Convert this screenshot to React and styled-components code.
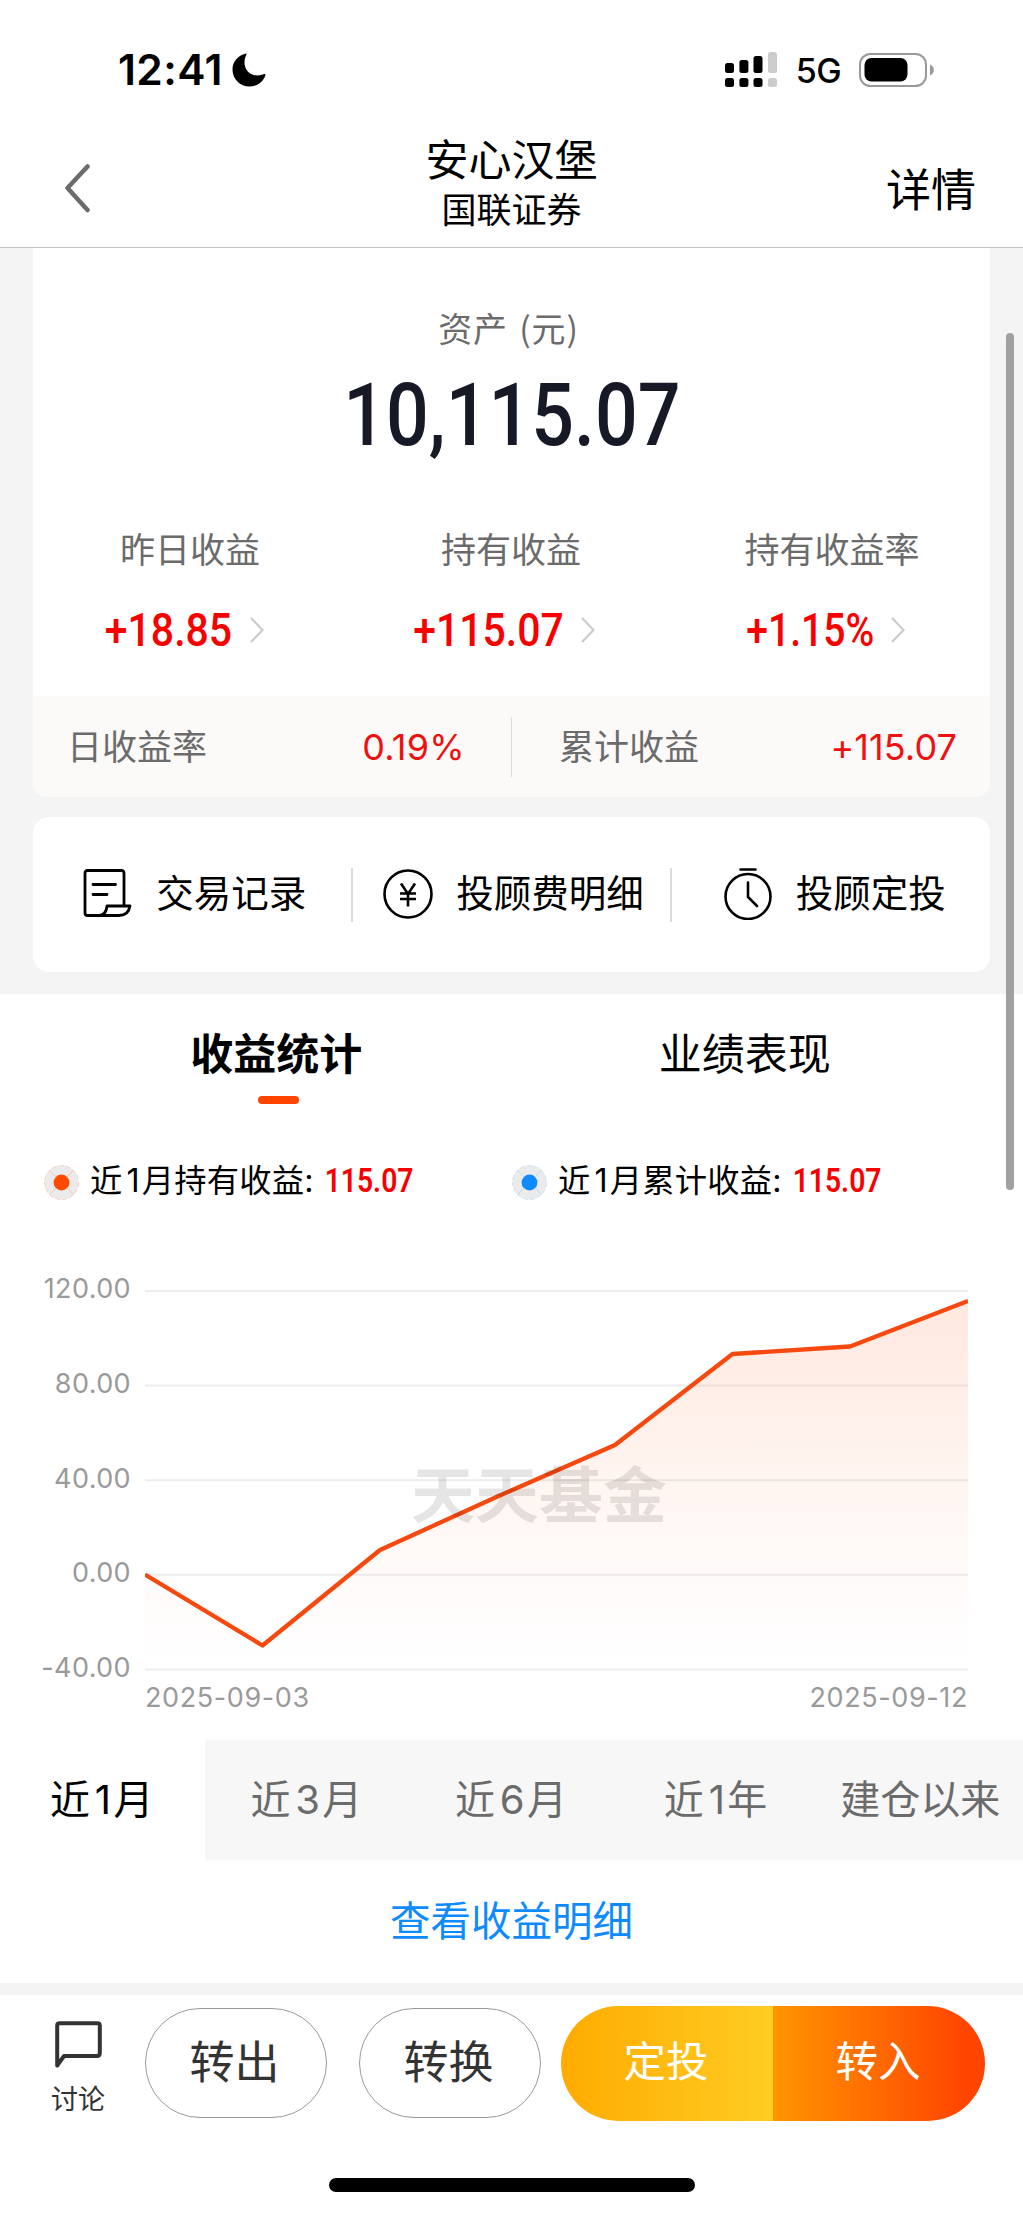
import React from "react";
import styled, { createGlobalStyle } from "styled-components";

const GlobalStyle = createGlobalStyle`
    *{
        box-sizing: border-box;
    }
    body{
        margin: 0;
        background: #fff;
        font-family: Inter, "Noto Sans CJK SC", sans-serif;
        color: #000;
    }
    svg{
        display: block;
        flex: none;
    }
`
const Page = styled.div`
    position: relative;
    width: 1023px;
    height: 2215px;
    overflow: hidden;
    display: flex;
    flex-direction: column;
    line-height: 1;
    white-space: nowrap;
    background: #fff;
`
const StatusBar = styled.div`
    height: 130px;
    padding: 9px 88px 0 118px;
    display: flex;
    align-items: center;
    justify-content: space-between;
`
const StatusGroup = styled.div`
    display: flex;
    align-items: center;
    gap: ${(props) => props.$gap}px;
`
const Clock = styled.span`
    font-size: 42.5px;
    font-weight: 600;
    letter-spacing: 0.4px;
    padding-top: 1px;
`
const Network = styled.span`
    font-size: 34px;
    font-weight: 500;
    letter-spacing: -0.6px;
    padding-top: 2px;
`
const Header = styled.header`
    height: 118px;
    flex: none;
    padding: 0 47px 0 64px;
    border-bottom: 1px solid #c2c2c2;
    display: grid;
    grid-template-columns: 140px 1fr 157px;
    align-items: center;
`
const Titles = styled.div`
    display: flex;
    flex-direction: column;
    align-items: center;
    gap: 11px;
    padding-bottom: 11px;
`
const Title = styled.div`
    font-size: 43px;
`
const Subtitle = styled.div`
    font-size: 35px;
`
const DetailLink = styled.a`
    font-size: 45px;
    justify-self: end;
    padding-top: 3px;
`
const Summary = styled.section`
    flex: none;
    height: 746px;
    padding: 0 33px;
    background: #f4f4f4;
    display: flex;
    flex-direction: column;
    gap: 20px;
`
const AssetCard = styled.div`
    height: 549px;
    background: #fff;
    border-radius: 0 0 14px 14px;
    overflow: hidden;
    display: flex;
    flex-direction: column;
    align-items: center;
`
const AssetLabel = styled.div`
    margin-top: 63px;
    height: 34px;
    font-family: "Noto Sans CJK SC", sans-serif;
    font-size: 34px;
    letter-spacing: 0.8px;
    word-spacing: 3px;
    color: #6b6b6b;
    padding-right: 6px;
`
const AssetTotal = styled.div`
    margin-top: 27px;
`
// Condensed figures: the slot keeps the narrow width, the text is squeezed into it.
const FigureSlot = styled.span`
    width: ${(props) => props.$width}px;
    height: ${(props) => props.$size}px;
    display: flex;
    flex: none;
    justify-content: center;
    align-items: center;
    font-family: Roboto, sans-serif;
    font-size: ${(props) => props.$size}px;
    font-weight: ${(props) => props.$weight};
    color: ${(props) => props.$color};
`
const FigureText = styled.span`
    flex: none;
    transform: scaleX(${(props) => props.$scale});
`
const Stats = styled.div`
    width: 963px;
    margin-top: 74px;
    display: grid;
    grid-template-columns: repeat(3, 321px);
`
const Stat = styled.div`
    display: flex;
    flex-direction: column;
    align-items: center;
    gap: 39px;
`
const StatLabel = styled.div`
    font-size: 35px;
    color: #6b6b6b;
    padding-right: 1px;
`
const StatValue = styled.div`
    display: flex;
    align-items: center;
    gap: 18px;
    padding-right: 13px;
`
const DayRow = styled.div`
    width: 100%;
    height: 101px;
    margin-top: auto;
    background: #fbfaf8;
    display: grid;
    grid-template-columns: 1fr 1px 1fr;
    align-items: center;
`
const DayCell = styled.div`
    display: flex;
    justify-content: space-between;
    align-items: center;
    padding: ${(props) => props.$pad};
    font-size: 35px;
    color: #6b6b6b;
`
const DayValue = styled.span`
    font-size: 36px;
    letter-spacing: ${(props) => props.$spacing}px;
    color: #f01010;
`
const Divider = styled.span`
    width: ${(props) => props.$width}px;
    height: ${(props) => props.$height}px;
    background: #dcdcdc;
`
const Actions = styled.div`
    height: 155px;
    background: #fff;
    border-radius: 16px;
    display: grid;
    grid-template-columns: 1fr 2px 1fr 2px 1fr;
    align-items: center;
`
const Action = styled.div`
    display: flex;
    align-items: center;
    justify-content: center;
    gap: ${(props) => props.$gap}px;
    padding-left: ${(props) => props.$shift}px;
    padding-bottom: 2px;
    font-size: 37.5px;
`
const Tabs = styled.div`
    flex: none;
    height: 130px;
    padding: 39px 44px 0 42px;
    display: grid;
    grid-template-columns: 1fr 1fr;
`
const Tab = styled.div`
    display: flex;
    flex-direction: column;
    align-items: center;
    gap: 20px;
    font-size: 43px;
    font-weight: ${(props) => (props.$active ? 700 : 400)};
    &::after{
        content: "";
        width: 41px;
        height: 8px;
        margin-left: 4px;
        border-radius: 4px;
        background: ${(props) => (props.$active ? "#ff4400" : "transparent")};
    }
`
const Legends = styled.div`
    flex: none;
    height: 116px;
    padding: 0 43px 0 44px;
    display: grid;
    grid-template-columns: 1fr 1fr;
    align-items: center;
`
const Legend = styled.div`
    display: flex;
    align-items: center;
    font-size: 32.3px;
`
const LegendText = styled.span`
    margin: -1px 11px 0 11px;
    letter-spacing: 0.2px;
`
const LegendValue = styled.span`
    margin-top: -2px;
`
const Digit = styled.span`
    padding: 0 0.06em 0 0.12em;
`
const Chart = styled.div`
    flex: none;
    height: 500px;
    padding: 36px 55px 0 0;
    display: grid;
    grid-template-columns: 131px 823px;
    grid-template-rows: 408px 30px;
    column-gap: 14px;
`
const AxisY = styled.div`
    display: flex;
    flex-direction: column;
    justify-content: space-between;
    align-items: flex-end;
    height: 406px;
    margin-top: -1px;
    font-size: 27px;
    letter-spacing: 0.4px;
    color: #9a9a9a;
`
const AxisX = styled.div`
    grid-column: 2;
    display: flex;
    justify-content: space-between;
    align-items: flex-start;
    font-size: 27px;
    letter-spacing: 0.6px;
    color: #9a9a9a;
`
const Plot = styled.div`
    position: relative;
    padding-top: 14px;
`
const Watermark = styled.span`
    position: absolute;
    left: 266px;
    top: 188px;
    font-size: 64px;
    font-weight: 700;
    color: rgba(0, 0, 0, 0.1);
    transform: scaleY(0.95);
`
const Ranges = styled.div`
    flex: none;
    height: 120px;
    display: grid;
    grid-template-columns: repeat(5, 1fr);
`
const Range = styled.div`
    display: flex;
    align-items: center;
    justify-content: center;
    padding: 0 1px 0 0;
    font-size: 40px;
    color: ${(props) => (props.$active ? "#000" : "#6b6b6b")};
    background: ${(props) => (props.$active ? "#fff" : "#f7f7f7")};
`
const MoreLink = styled.a`
    flex: none;
    height: 123px;
    padding-top: 2px;
    display: flex;
    align-items: center;
    justify-content: center;
    font-size: 40.5px;
    color: #0f8bff;
`
const Gap = styled.div`
    flex: none;
    height: 12px;
    background: #f4f4f4;
`
const BottomBar = styled.div`
    flex: none;
    height: 135px;
    padding: 10px 38px 0 52px;
    display: flex;
    align-items: flex-start;
`
const Discuss = styled.div`
    width: 52px;
    margin: 16px 41px 0 0;
    display: flex;
    flex-direction: column;
    align-items: center;
    gap: 18px;
    font-size: 27px;
    color: #333;
`
const Pill = styled.button`
    width: 182px;
    height: 110px;
    margin: 3px ${(props) => props.$after}px 0 0;
    padding: 0 3px 1px 0;
    border: 1px solid #999;
    border-radius: 55px;
    background: #fff;
    font: inherit;
    font-size: 45px;
    color: #333;
`
const Combo = styled.div`
    width: 424px;
    height: 115px;
    margin-top: 1px;
    border-radius: 58px;
    overflow: hidden;
    display: grid;
    grid-template-columns: 1fr 1fr;
`
const ComboButton = styled.button`
    border: 0;
    padding: 0 2px 2px 0;
    font: inherit;
    font-size: 42.5px;
    color: #fff;
    background: linear-gradient(90deg, ${(props) => props.$from}, ${(props) => props.$to} ${(props) => props.$stop});
`
const HomeIndicator = styled.div`
    width: 366px;
    height: 14px;
    margin: 48px auto 0;
    border-radius: 7px;
    background: #000;
`
const ScrollThumb = styled.div`
    position: absolute;
    right: 9px;
    top: 333px;
    width: 8px;
    height: 857px;
    border-radius: 4px;
    background: #a0a0a0;
`

const stats = [
    { label: "昨日收益", value: "+18.85", width: 127 },
    { label: "持有收益", value: "+115.07", width: 148 },
    { label: "持有收益率", value: "+1.15%", width: 125, scale: 0.85 },
]
const ranges = [["近", "1", "月"], ["近", "3", "月"], ["近", "6", "月"], ["近", "1", "年"], ["建仓以来"]]
const ticks = ["120.00", "80.00", "40.00", "0.00", "-40.00"]
const points = [[0, 284.5], [117.5, 355.5], [235, 260], [352.5, 206.5], [470, 155], [587.5, 64], [705, 56.5], [823, 11]]
const line = points.map((p) => p.join(",")).join(" ")

const Figure = ({ children, size, width, color = "#f80000", weight = 500, scale = 0.89 }) => (
    <FigureSlot $size={size} $width={width} $color={color} $weight={weight}>
        <FigureText $scale={scale}>{children}</FigureText>
    </FigureSlot>
)

const Moon = () => (
    <svg width="34" height="34" viewBox="0 0 34 34">
        <path d="M14 0.5C5.500 2.500 0.500 9 0.500 16.500C0.500 26 8 33.500 17.500 33.500C25 33.500 31.500 29 33.500 22C33.700 21.200 33 20.800 32.300 21.100C30 22 28 22.500 25.500 22.500C18 22.500 12.500 17 12.500 9.500C12.500 6.500 13.200 4 14.400 1.800C14.800 1 14.600 0.400 14 0.500Z" />
    </svg>
)

const Signal = () => (
    <svg width="53" height="36" viewBox="0 0 53 36">
        {[[0, 11], [14.4, 8], [28.5, 4], [43, 0]].map(([x, y], i) => (
            <g key={x} fill={i === 3 ? "#ccc" : "#000"}>
                <rect x={x} y={y} width="9" height={21 - y} rx="2.500" />
                <rect x={x} y="26" width="9" height="9" rx="2.500" />
            </g>
        ))}
    </svg>
)

const Battery = () => (
    <svg width="76" height="34" viewBox="0 0 76 34">
        <rect x="1" y="1" width="66" height="32" rx="10.500" fill="none" stroke="#999" strokeWidth="2" />
        <rect x="5.500" y="5" width="43" height="23.500" rx="7" />
        <path d="M71 11.500C76 13.500 76 20.500 71 22.500Z" fill="#999" />
    </svg>
)

const Back = () => (
    <svg width="26" height="50" viewBox="0 1.500 26 50" fill="none" stroke="#6b6b6b" strokeWidth="4.500" strokeLinecap="round" strokeLinejoin="round">
        <path d="M23.500 4L3.500 25.500L23.500 47.500" />
    </svg>
)

const Chevron = () => (
    <svg width="14" height="26" viewBox="0 0 14 26" fill="none" stroke="#ccc" strokeWidth="2.200">
        <path d="M1 1L12.500 13L1 25" />
    </svg>
)

const Record = () => (
    <svg width="49" height="49" viewBox="0 0 49 49" fill="none" stroke="#000" strokeWidth="2.800" strokeLinecap="round" strokeLinejoin="round">
        <path d="M41 37V4Q41 1.500 38.500 1.500H4.500Q2 1.500 2 4V44Q2 46.500 4.500 46.500H36C42 46.500 46 43 47 37H24C23.500 42 21 46 16.500 46.500" />
        <path d="M10 15.500H32.500M10 25.500H24" />
    </svg>
)

const Fee = () => (
    <svg width="50" height="50" viewBox="0 0 50 50" fill="none" stroke="#000" strokeWidth="2.600">
        <circle cx="25" cy="25" r="23.500" />
        <path d="M18 14.500L25 25L32 14.500M25 25V37.500M17 24.500H33M17 30H33" />
    </svg>
)

const Timer = () => (
    <svg width="48" height="53" viewBox="0 0 48 53" fill="none" stroke="#000" strokeWidth="2.600" strokeLinecap="round">
        <circle cx="24" cy="29.500" r="22.500" />
        <path d="M16.500 2.500H31.500M24 15.500V30L33 39" />
    </svg>
)

const Dot = ({ color, edge }) => (
    <svg width="35" height="35" viewBox="0 0 35 35">
        <circle cx="17.500" cy="17.500" r="17" fill="#ebebeb" stroke={edge} strokeWidth="0.700" strokeDasharray="5 2" />
        <path d="M5.500 5.500L29.500 29.500M29.500 5.500L5.500 29.500" stroke={edge} strokeWidth="0.900" />
        <circle cx="17.500" cy="17.500" r="7.900" fill={color} />
    </svg>
)

const Bubble = () => (
    <svg width="47" height="47" viewBox="0 0 47 47" fill="none" stroke="#333" strokeWidth="4" strokeLinejoin="round">
        <path d="M2.200 44.500V4.500Q2.200 2.200 4.500 2.200H42.500Q44.800 2.200 44.800 4.500V32Q44.800 35 42 35H9Z" />
    </svg>
)

const App = () => {
    return(
        <Page>
            <GlobalStyle />
            <StatusBar>
                <StatusGroup $gap={9}>
                    <Clock>12:41</Clock>
                    <Moon />
                </StatusGroup>
                <StatusGroup $gap={18}>
                    <Signal />
                    <Network>5G</Network>
                    <Battery />
                </StatusGroup>
            </StatusBar>
            <Header>
                <Back />
                <Titles>
                    <Title>安心汉堡</Title>
                    <Subtitle>国联证券</Subtitle>
                </Titles>
                <DetailLink>详情</DetailLink>
            </Header>
            <Summary>
                <AssetCard>
                    <AssetLabel>资产 (元)</AssetLabel>
                    <AssetTotal>
                        <Figure size={87} width={334} color="#171a26" scale={0.865}>10,115.07</Figure>
                    </AssetTotal>
                    <Stats>
                        {stats.map((s) => (
                            <Stat key={s.label}>
                                <StatLabel>{s.label}</StatLabel>
                                <StatValue>
                                    <Figure size={46} width={s.width} scale={s.scale}>{s.value}</Figure>
                                    <Chevron />
                                </StatValue>
                            </Stat>
                        ))}
                    </Stats>
                    <DayRow>
                        <DayCell $pad="1px 46px 0 34px">
                            日收益率
                            <DayValue $spacing={0.3}>0.19%</DayValue>
                        </DayCell>
                        <Divider $width={1} $height={60} />
                        <DayCell $pad="1px 33px 0 47px">
                            累计收益
                            <DayValue $spacing={0.1}>+115.07</DayValue>
                        </DayCell>
                    </DayRow>
                </AssetCard>
                <Actions>
                    <Action $gap={24} $shift={6}><Record />交易记录</Action>
                    <Divider $width={2} $height={54} />
                    <Action $gap={23} $shift={4}><Fee />投顾费明细</Action>
                    <Divider $width={2} $height={54} />
                    <Action $gap={24} $shift={7}><Timer />投顾定投</Action>
                </Actions>
            </Summary>
            <Tabs>
                <Tab $active>收益统计</Tab>
                <Tab>业绩表现</Tab>
            </Tabs>
            <Legends>
                <Legend>
                    <Dot color="#ff4a00" edge="#f5c4ae" />
                    <LegendText>近<Digit>1</Digit>月持有收益:</LegendText>
                    <LegendValue>
                        <Figure size={32.5} width={88} weight={600} scale={0.87}>115.07</Figure>
                    </LegendValue>
                </Legend>
                <Legend>
                    <Dot color="#0f8bff" edge="#bcdcf5" />
                    <LegendText>近<Digit>1</Digit>月累计收益:</LegendText>
                    <LegendValue>
                        <Figure size={32.5} width={88} weight={600} scale={0.87}>115.07</Figure>
                    </LegendValue>
                </Legend>
            </Legends>
            <Chart>
                <AxisY>
                    {ticks.map((t) => <span key={t}>{t}</span>)}
                </AxisY>
                <Plot>
                    <svg width="823" height="382" viewBox="0 0 823 382">
                        <defs>
                            <linearGradient id="area" x1="0" y1="0" x2="0" y2="1">
                                <stop offset="0" stopColor="#ff4a00" stopOpacity="0.125" />
                                <stop offset="0.720" stopColor="#ff4a00" stopOpacity="0.025" />
                                <stop offset="1" stopColor="#ff4a00" stopOpacity="0" />
                            </linearGradient>
                        </defs>
                        {ticks.map((t, i) => (
                            <line key={t} x1="0" x2="823" y1={1 + i * 94.6} y2={1 + i * 94.6} stroke="#ededed" strokeWidth="2" />
                        ))}
                        <polygon points={`${line} 823,379 0,379`} fill="url(#area)" />
                        <polyline points={line} fill="none" stroke="#f5490f" strokeWidth="4.300" strokeLinejoin="round" />
                    </svg>
                    <Watermark>天天基金</Watermark>
                </Plot>
                <AxisX>
                    <span>2025-09-03</span>
                    <span>2025-09-12</span>
                </AxisX>
            </Chart>
            <Ranges>
                {ranges.map(([head, digit, unit], i) => (
                    <Range key={i} $active={i === 0}>
                        {head}{digit && <Digit>{digit}</Digit>}{unit}
                    </Range>
                ))}
            </Ranges>
            <MoreLink>查看收益明细</MoreLink>
            <Gap />
            <BottomBar>
                <Discuss>
                    <Bubble />
                    讨论
                </Discuss>
                <Pill $after={32}>转出</Pill>
                <Pill $after={20}>转换</Pill>
                <Combo>
                    <ComboButton $from="#ffab00" $to="#ffcc22" $stop="100%">定投</ComboButton>
                    <ComboButton $from="#ff9500" $to="#ff4400" $stop="92%">转入</ComboButton>
                </Combo>
            </BottomBar>
            <HomeIndicator />
            <ScrollThumb />
        </Page>
    )
}
export default App
